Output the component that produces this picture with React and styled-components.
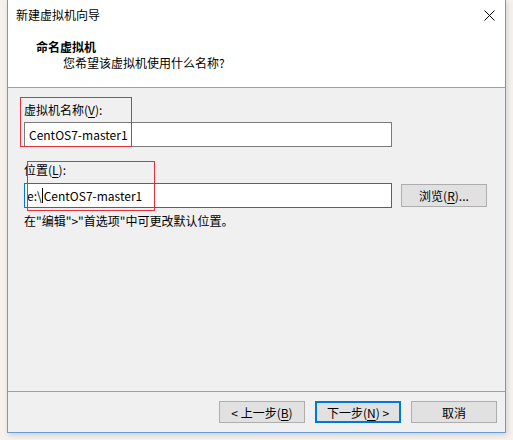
import React from "react";
import styled, { createGlobalStyle } from "styled-components";

const GlobalStyle = createGlobalStyle`
  html, body {
    margin: 0;
    padding: 0;
    background: #f6f1ec;
  }
  * {
    box-sizing: border-box;
  }
`;

const Page = styled.div`
  width: 513px;
  height: 440px;
  padding: 0 7px 0 7px;
  font-family: "Noto Sans CJK SC", "Noto Sans", sans-serif;
  font-size: 12px;
  color: #000;
`;

const Window = styled.div`
  width: 499px;
  height: 433px;
  display: flex;
  flex-direction: column;
  background: #f0f0f0;
  border: 1px solid #6c9ad3;
  border-top: none;
  box-shadow: 1px 2px 5px rgba(120, 150, 190, 0.35);
`;

const TitleBar = styled.div`
  height: 30px;
  display: flex;
  align-items: center;
  justify-content: space-between;
  padding: 0 10px 0 8px;
  background: #fff;
  line-height: 16px;
`;

const CloseIcon = styled.svg`
  width: 11px;
  height: 11px;
`;

const Header = styled.div`
  height: 58px;
  padding: 9px 0 0 28px;
  background: #fff;
  border-bottom: 1px solid #a0a0a0;
  line-height: 16px;
`;

const HeaderTitle = styled.div`
  font-weight: 700;
`;

const HeaderSub = styled.div`
  padding-left: 27px;
`;

const Body = styled.div`
  flex: 1;
  padding: 14px 0 0 16px;
  display: flex;
  flex-direction: column;
`;

const Field = styled.div`
  position: relative;
  display: flex;
  flex-direction: column;
  margin-top: ${({ $top }) => $top || 0}px;
`;

const Label = styled.div`
  line-height: 16px;
  margin-bottom: ${({ $gap }) => $gap}px;
`;

const Row = styled.div`
  display: flex;
  align-items: center;
  gap: 9px;
`;

const TextBox = styled.div`
  width: 368px;
  height: 25px;
  display: flex;
  align-items: center;
  padding-left: ${({ $pad }) => $pad}px;
  background: #fff;
  border: 1px solid ${({ $focused }) => ($focused ? "#0078d7" : "#7a7a7a")};
  white-space: pre;
`;

const Caret = styled.span`
  display: inline-block;
  width: 1px;
  height: 15px;
  background: #000;
  margin: 0 1px 0 0;
`;

const Button = styled.button`
  width: 86px;
  height: ${({ $h }) => $h || 22}px;
  padding: 0;
  font-family: inherit;
  font-size: 12px;
  color: #000;
  background: #e1e1e1;
  border: 1px solid ${({ $primary }) => ($primary ? "#0078d7" : "#adadad")};
  box-shadow: ${({ $primary }) => ($primary ? "inset 0 0 0 1px #0078d7" : "none")};
`;

const Hint = styled.div`
  line-height: 16px;
  margin-top: 5px;
`;

const Marker = styled.div`
  position: absolute;
  left: ${({ $x }) => $x}px;
  top: ${({ $y }) => $y}px;
  width: ${({ $w }) => $w}px;
  height: ${({ $h }) => $h}px;
  border: 1px solid #e0313f;
  pointer-events: none;
`;

const Footer = styled.div`
  display: flex;
  justify-content: flex-end;
  gap: 10px;
  padding: 9px 8px 9px 0;
  border-top: 1px solid #a0a0a0;
`;

const U = styled.span`
  text-decoration: underline;
  text-underline-offset: 2px;
`;

export default function App() {
  return (
    <>
      <GlobalStyle />
      <Page>
        <Window>
          <TitleBar>
            <span>新建虚拟机向导</span>
            <CloseIcon viewBox="0 0 11 11">
              <path d="M0.5 0.5 L10.5 10.5 M10.5 0.5 L0.5 10.5" stroke="#000" strokeWidth="1" />
            </CloseIcon>
          </TitleBar>
          <Header>
            <HeaderTitle>命名虚拟机</HeaderTitle>
            <HeaderSub>您希望该虚拟机使用什么名称?</HeaderSub>
          </Header>
          <Body>
            <Field>
              <Label $gap={4}>
                虚拟机名称(<U>V</U>):
              </Label>
              <TextBox $pad={4}>CentOS7-master1</TextBox>
              <Marker $x={-4} $y={-5} $w={112} $h={50} />
            </Field>
            <Field $top={15}>
              <Label $gap={5}>
                位置(<U>L</U>):
              </Label>
              <Row>
                <TextBox $focused $pad={2}>
                  e:\<Caret />CentOS7-master1
                </TextBox>
                <Button $h={23}>
                  浏览(<U>R</U>)...
                </Button>
              </Row>
              <Marker $x={3} $y={-1} $w={128} $h={50} />
            </Field>
            <Hint>在"编辑"&gt;"首选项"中可更改默认位置。</Hint>
          </Body>
          <Footer>
            <Button>
              &lt; 上一步(<U>B</U>)
            </Button>
            <Button $primary>
              下一步(<U>N</U>) &gt;
            </Button>
            <Button>取消</Button>
          </Footer>
        </Window>
      </Page>
    </>
  );
}
